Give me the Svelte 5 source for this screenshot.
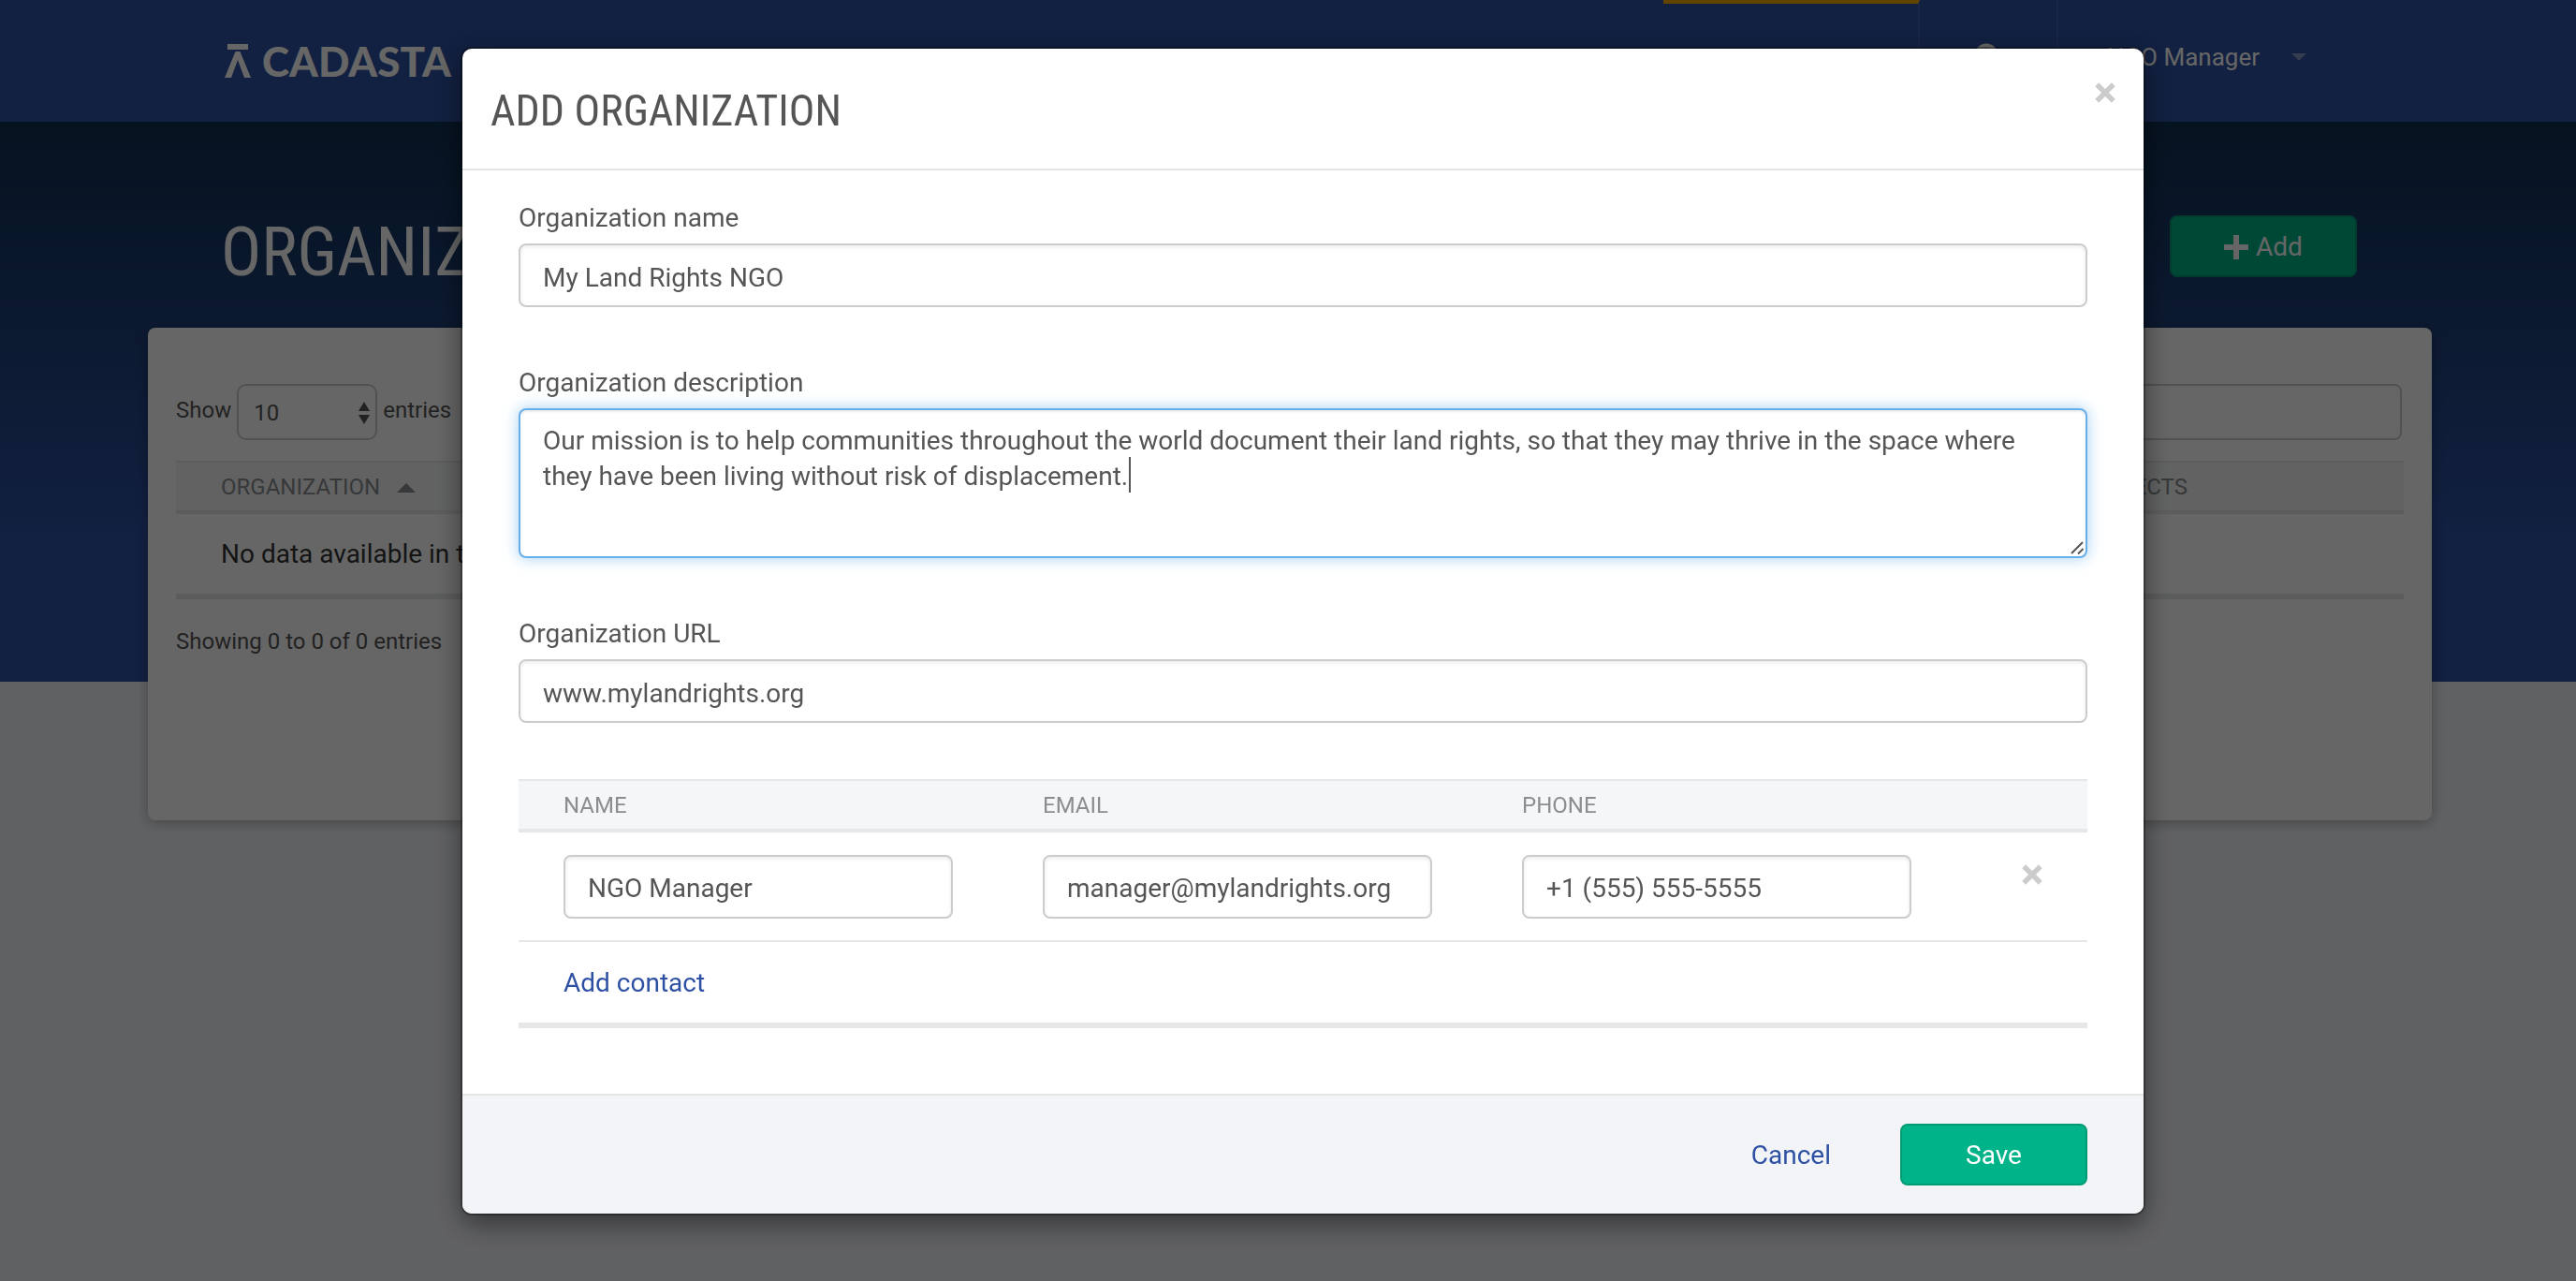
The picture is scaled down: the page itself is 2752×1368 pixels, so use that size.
<script>
  let name = $state('My Land Rights NGO');
  let url = $state('www.mylandrights.org');
  let description = $state('Our mission is to help communities throughout the world document their land rights, so that they may thrive in the space where they have been living without risk of displacement.');
  let contacts = $state([{ name: 'NGO Manager', email: 'manager@mylandrights.org', phone: '+1 (555) 555-5555' }]);
  let area;
  $effect(() => {
    area.focus({ preventScroll: true });
    area.setSelectionRange(description.length, description.length);
  });
</script>

<div class="page">
  <header class="topbar">
    <a class="logo" href="#home" aria-label="Cadasta home">
      <svg viewBox="0 0 28 36" aria-hidden="true"><path d="M3 0H25V6H3zM11.500 8H16.500L28 36H21L14 17L7 36H0z" /></svg>
      <span>CADASTA</span>
    </a>
    <nav>
      <a class="tab active" href="#organizations" aria-label="Organizations"></a>
      <a class="tab search" href="#search" aria-label="Search">
        <svg viewBox="0 0 32 32" aria-hidden="true"><circle cx="13" cy="13" r="10" /><path d="M20 20L30 30" /></svg>
      </a>
      <a class="tab user" href="#account">NGO Manager<i class="caret"></i></a>
    </nav>
  </header>
  <div class="hero">
    <h1>ORGANIZATIONS</h1>
    <button class="btn add" type="button">
      <svg viewBox="0 0 26 26" aria-hidden="true"><path d="M10 0h6v10h10v6H16v10h-6V16H0v-6h10z" /></svg>Add
    </button>
  </div>
  <section class="panel">
    <div class="controls">
      <div class="length">
        <label for="length">Show</label>
        <span class="pick">
          <select id="length"><option>10</option><option>25</option></select>
          <svg viewBox="0 0 12 24" aria-hidden="true"><path d="M0 10L6 0L12 10zM0 14H12L6 24z" /></svg>
        </span>
        <span>entries</span>
      </div>
      <input class="filter" type="search" aria-label="Search organizations" />
    </div>
    <table class="list">
      <thead>
        <tr><th>ORGANIZATION <i class="sort"></i></th><th>PROJECTS</th></tr>
      </thead>
      <tbody>
        <tr><td colspan="2">No data available in table</td></tr>
      </tbody>
    </table>
    <p>Showing 0 to 0 of 0 entries</p>
  </section>
</div>

<div class="backdrop">
  <form class="modal" aria-labelledby="title" onsubmit={(e) => e.preventDefault()}>
    <div class="head">
      <h2 id="title">ADD ORGANIZATION</h2>
      <button class="close" type="button" aria-label="Close">
        <svg viewBox="0 0 20 20" aria-hidden="true"><path d="M2 2L18 18M18 2L2 18" /></svg>
      </button>
    </div>
    <div class="body">
      <div class="field">
        <label for="name">Organization name</label>
        <input id="name" bind:value={name} />
      </div>
      <div class="field">
        <label for="description">Organization description</label>
        <div class="area">
          <textarea id="description" spellcheck="false" bind:this={area} bind:value={description}></textarea>
          <i class="cursor"></i>
          <svg class="grip" viewBox="0 0 14 14" aria-hidden="true"><path d="M1 13L13 1M8 13.500L13.500 8" /></svg>
        </div>
      </div>
      <div class="field">
        <label for="url">Organization URL</label>
        <input id="url" bind:value={url} />
      </div>
      <table class="contacts">
        <thead>
          <tr><th>NAME</th><th>EMAIL</th><th>PHONE</th><th class="act"></th></tr>
        </thead>
        <tbody>
          {#each contacts as contact}
            <tr>
              <td><input aria-label="Name" bind:value={contact.name} /></td>
              <td><input aria-label="Email" bind:value={contact.email} /></td>
              <td><input aria-label="Phone" bind:value={contact.phone} /></td>
              <td class="act">
                <button class="close" type="button" aria-label="Remove contact">
                  <svg viewBox="0 0 20 20" aria-hidden="true"><path d="M2 2L18 18M18 2L2 18" /></svg>
                </button>
              </td>
            </tr>
          {/each}
        </tbody>
        <tfoot>
          <tr><td colspan="4"><a href="#add-contact">Add contact</a></td></tr>
        </tfoot>
      </table>
    </div>
    <div class="foot">
      <button class="link" type="button">Cancel</button>
      <button class="btn save" type="submit">Save</button>
    </div>
  </form>
</div>

<style>
  :global(body) {
    background: #f1f3f8;
    color: #555;
    font: 28px/38px Roboto, "Liberation Sans", sans-serif;
  }
  * { box-sizing: border-box; }
  input, textarea, select, button { font: inherit; color: inherit; }
  h1, h2, p { margin: 0; font-weight: 400; }
  h1, h2 { font-family: "Roboto Condensed", Roboto, sans-serif; }
  a { color: #2e51a3; text-decoration: none; }

  .page {
    min-height: 100vh;
    background: linear-gradient(#0e2f50 130px, #2e51a3 570px, #2e51a3 728px, #f1f3f8 728px);
  }
  .topbar {
    display: flex;
    justify-content: space-between;
    height: 130px;
    padding: 0 288px 0 240px;
    background: #2e51a3;
  }
  .logo {
    display: flex;
    align-items: center;
    gap: 12px;
    color: #fff;
    font: 900 44px/50px Lato, sans-serif;
  }
  .logo svg { width: 28px; height: 36px; fill: #fff; }
  nav { display: flex; }
  .tab { border-right: 2px solid #3c5cac; }
  .active { width: 274px; border-top: 4px solid #efab00; }
  .search { width: 148px; padding: 46px 58px; }
  .search svg { width: 32px; height: 32px; fill: none; stroke: #fff; stroke-width: 5; }
  .user { display: flex; align-items: center; gap: 34px; padding: 0 0 8px 52px; border: 0; color: #fff; font-size: 26px; }
  .caret { border: 8px solid transparent; border-top-color: #8297c8; border-bottom: 0; }

  .hero {
    display: flex;
    align-items: flex-start;
    justify-content: space-between;
    height: 220px;
    padding: 100px 234px 0 236px;
  }
  h1 { color: #fff; font-size: 72px; line-height: 80px; }
  .btn {
    width: 200px;
    height: 66px;
    padding: 2px 0 0;
    border: 2px solid #009a73;
    border-radius: 8px;
    background: #00b388;
    color: #fff;
  }
  .add { display: flex; align-items: center; justify-content: center; gap: 8px; }
  .add svg { width: 26px; height: 26px; fill: #fff; }

  .panel {
    min-height: 526px;
    margin: 0 154px 0 158px;
    padding: 60px 30px;
    border-radius: 8px;
    background: #fff;
    box-shadow: 0 2px 14px rgba(0, 0, 0, 0.3);
    font-size: 24px;
  }
  .controls { display: flex; justify-content: space-between; }
  .length { display: flex; align-items: center; gap: 6px; height: 60px; padding-bottom: 4px; }
  .pick { position: relative; top: 2px; }
  select {
    display: block;
    width: 150px;
    height: 60px;
    padding: 2px 16px 0;
    border: 2px solid #ccc;
    border-radius: 10px;
    background: #fff;
    appearance: none;
  }
  .pick svg { position: absolute; right: 8px; top: 18px; width: 12px; height: 26px; fill: #555; }
  .filter { width: 400px; height: 60px; margin-right: 2px; border: 2px solid #ccc; border-radius: 8px; background: #fff; }

  table { width: 100%; border-collapse: collapse; }
  th {
    height: 54px;
    padding: 0 48px;
    border-top: 2px solid #e6e7e9;
    border-bottom: 4px solid #e6e7e9;
    background: #f5f6f8;
    color: #8b8d8f;
    font-size: 24px;
    font-weight: 400;
    line-height: 48px;
    text-align: left;
  }
  .list { margin: 22px 0 26px; }
  .list th:last-child { width: 396px; }
  .list td { height: 90px; padding: 0 48px; border-bottom: 6px solid #e6e7e9; color: #333; font-size: 28px; }
  .sort { display: inline-block; margin: 0 0 2px 12px; border: 10px solid transparent; border-bottom-color: #8b8d8f; border-top: 0; }

  .backdrop {
    position: fixed;
    inset: 0;
    display: flex;
    align-items: flex-start;
    justify-content: center;
    padding-top: 52px;
    overflow: auto;
    background: rgba(0, 0, 0, 0.6);
  }
  .modal {
    width: 1796px;
    max-width: 94vw;
    margin-left: 32px;
    border-radius: 10px;
    background: #fff;
    box-shadow: 0 0 0 2px rgba(0, 0, 0, 0.3), 0 10px 30px rgba(0, 0, 0, 0.5);
  }
  .head { display: flex; justify-content: space-between; height: 130px; padding: 36px 30px; border-bottom: 2px solid #e5e5e5; }
  h2 { font-size: 46px; line-height: 60px; }
  .close { display: block; width: 22px; height: 22px; padding: 0; border: 0; background: none; }
  .close svg { display: block; width: 22px; height: 22px; fill: none; stroke: #ccc; stroke-width: 5; }
  .body { padding: 32px 60px 70px; }
  .field { margin-bottom: 60px; }
  .field + .field { padding-top: 2px; }
  .field label { display: block; margin-bottom: 8px; }
  .modal input, textarea {
    display: block;
    width: 100%;
    height: 68px;
    padding: 4px 24px 0;
    border: 2px solid #ccc;
    border-radius: 8px;
    background: #fff;
    outline: 0;
    box-shadow: inset 0 2px 4px rgba(0, 0, 0, 0.08);
  }
  .area { position: relative; }
  .modal textarea {
    height: 160px;
    padding: 14px 24px;
    caret-color: transparent;
    resize: none;
  }
  .cursor { position: absolute; left: 652px; top: 52px; width: 2px; height: 38px; background: #555; }
  .grip { position: absolute; right: 4px; bottom: 4px; width: 14px; height: 14px; fill: none; stroke: #555; stroke-width: 2; }
  .modal textarea:focus, .modal input:focus {
    border-color: #66afe9;
    box-shadow: inset 0 2px 2px rgba(0, 0, 0, 0.08), 0 0 16px rgba(102, 175, 233, 0.6);
  }
  .contacts td { height: 118px; padding: 0 48px; border-bottom: 2px solid #e6e7e9; }
  .contacts tfoot td { height: 90px; padding-top: 2px; border-bottom: 6px solid #e6e7e9; }
  .contacts .act { width: 140px; }
  .contacts .close { margin: 0 0 26px auto; }
  .foot {
    display: flex;
    align-items: center;
    justify-content: flex-end;
    gap: 74px;
    height: 128px;
    padding: 0 60px;
    border-top: 2px solid #e5e5e5;
    border-radius: 0 0 10px 10px;
    background: #f2f4f8;
  }
  .link { padding: 2px 0 0; border: 0; background: none; color: #2e51a3; }
</style>
